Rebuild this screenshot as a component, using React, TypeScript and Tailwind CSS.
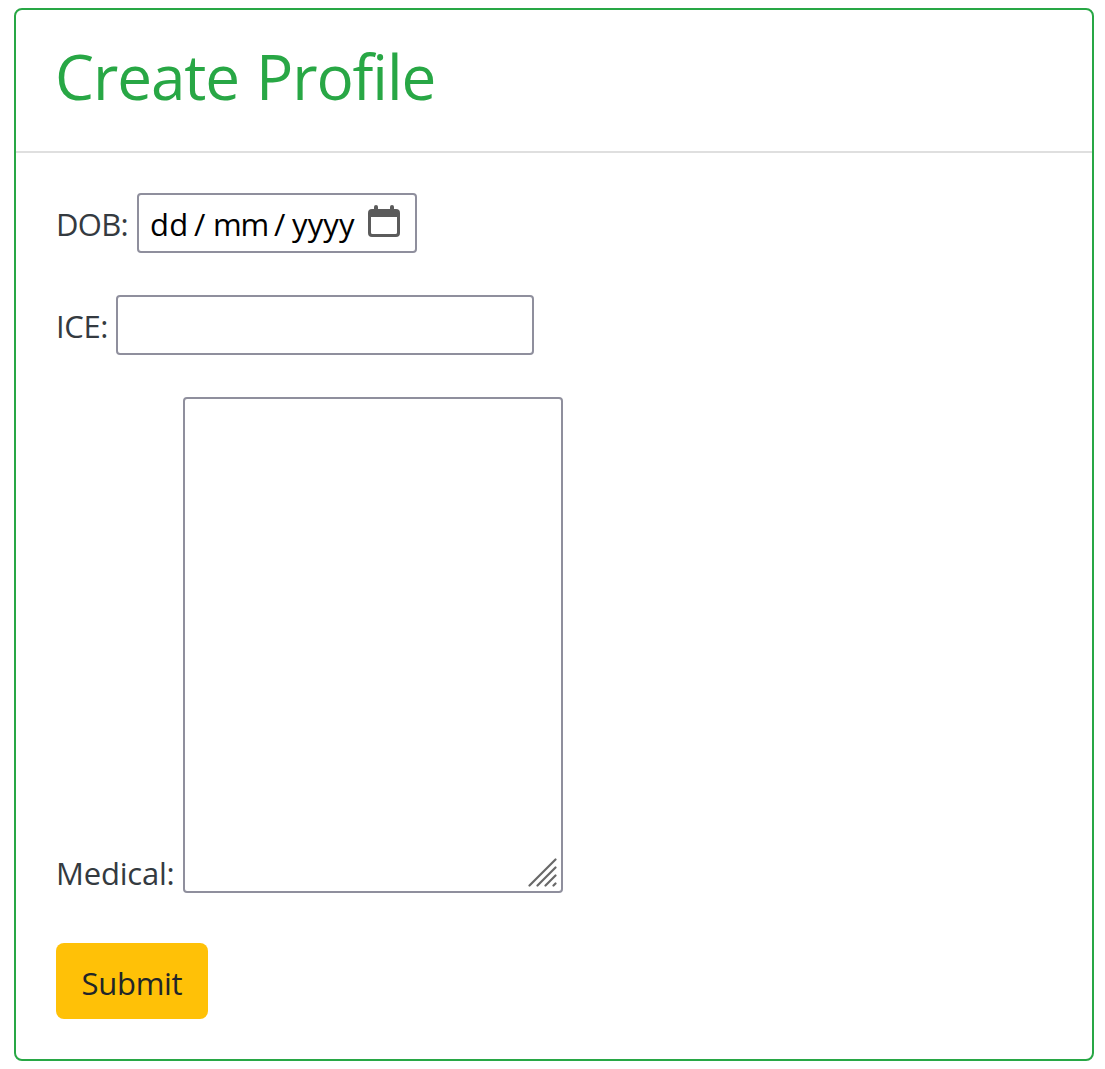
function CalendarIcon() {
  return (
    <svg className="h-8 w-8" viewBox="0 0 32 32" fill="#5b5b5b">
      <rect x="6" y="0" width="4" height="8" rx="2" />
      <rect x="22" y="0" width="4" height="8" rx="2" />
      <path fillRule="evenodd" d="M4 4h24a4 4 0 0 1 4 4v20a4 4 0 0 1-4 4H4a4 4 0 0 1-4-4V8a4 4 0 0 1 4-4ZM3 12v15.500A1.500 1.500 0 0 0 4.500 29h23a1.500 1.500 0 0 0 1.500-1.500V12Z" />
    </svg>
  );
}

function ResizeGrip() {
  return (
    <svg className="absolute right-[3px] bottom-[3px] h-[30px] w-[30px]" viewBox="0 0 30 30" stroke="#686868" strokeWidth="2.2" strokeLinecap="round">
      <path d="M1.500 27.500 27.500 1.500M9.500 27.500l18-18M17.500 27.500l10-10M25.500 27.500l2-2" />
    </svg>
  );
}

export default function App() {
  return (
    <main className="h-[1069px] bg-white pt-2 pl-[14px] font-['Open_Sans',sans-serif] text-[31px] leading-[48px] text-[#343a40]">
      <section className="h-[1053px] w-[1080px] rounded-[8px] border-2 border-[#28a745]">
        <header className="h-[143px] border-b-2 border-[#dfdfdf] pt-[28px] pl-[39px] text-[#28a745]">
          <h1 className="text-[62px] leading-[77px] font-[430] tracking-[-1.1px] whitespace-nowrap [word-spacing:2px]">Create Profile</h1>
        </header>
        <form className="flex flex-col items-start pt-10 pl-10">
          <div className="flex h-[60px] items-start">
            <label className="w-[81px] pt-[7px] tracking-[-0.700px] whitespace-nowrap">DOB:</label>
            <div className="flex h-[60px] w-[280px] items-start rounded-[4px] border-2 border-[#8f8f9d] pt-[5px] pl-[11px] text-black">
              <span className="w-[44px] tracking-[0.300px]">dd</span>
              <span className="w-[19px]">/</span>
              <span className="w-[61px] tracking-[-1.200px]">mm</span>
              <span className="w-[18px]">/</span>
              <span className="w-[76px] tracking-[0.100px]">yyyy</span>
              <span className="mt-[5px]"><CalendarIcon /></span>
            </div>
          </div>
          <div className="mt-[42px] flex h-[60px] items-start">
            <label htmlFor="ice" className="w-[60px] pt-[7px] tracking-[-0.400px] whitespace-nowrap">ICE:</label>
            <input id="ice" className="h-[60px] w-[418px] rounded-[4px] border-2 border-[#8f8f9d] px-2 outline-none" />
          </div>
          <div className="mt-[42px] flex h-[496px] items-end">
            <label htmlFor="medical" className="-mb-[4px] w-[127px] tracking-[-0.200px] whitespace-nowrap">Medical:</label>
            <div className="relative h-[496px] w-[380px] rounded-[4px] border-2 border-[#8f8f9d]">
              <textarea id="medical" className="block h-full w-full resize-none p-1 outline-none" />
              <ResizeGrip />
            </div>
          </div>
          <button type="button" className="mt-[50px] flex h-[76px] w-[152px] justify-center rounded-[8px] bg-[#ffc107] pt-[16px] tracking-[-0.300px] text-[#212529]">Submit</button>
        </form>
      </section>
    </main>
  );
}
